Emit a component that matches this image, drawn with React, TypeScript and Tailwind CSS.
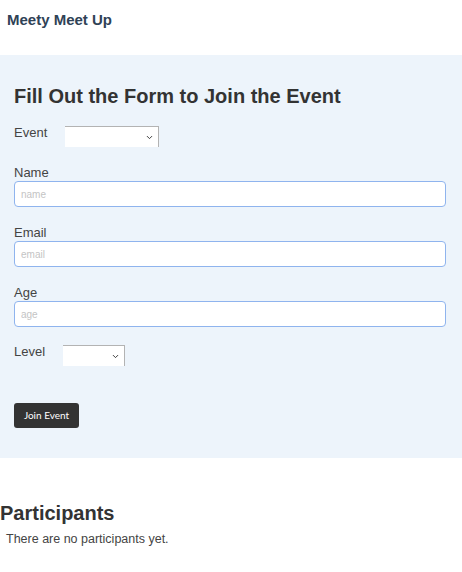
import { ChevronDown } from 'lucide-react';

const FIELDS = [
  { label: 'Name', placeholder: 'name' },
  { label: 'Email', placeholder: 'email' },
  { label: 'Age', placeholder: 'age' },
];

function PlainSelect({ width }: { width: string }) {
  return (
    <div className={`relative h-[21px] ${width} bg-white border-t border-r border-[#b3b3b3]`}>
      <ChevronDown className="absolute right-[4px] top-[6px] w-[9px] h-[9px] text-[#333]" strokeWidth={2.5} />
    </div>
  );
}

export default function App() {
  return (
    <div className="w-[462px] min-h-[572px] bg-white font-['Liberation_Sans',Arial,sans-serif] text-[#444]">
      <div className="h-[55px] px-[7px] pt-[10px]">
        <p className="text-[15px] leading-[19px] font-bold text-[#2f4256]">Meety Meet Up</p>
      </div>

      <section className="h-[403px] bg-[#edf4fb] pl-[14px] pr-[16px] pt-[29px]">
        <h2 className="text-[20px] leading-[24px] font-bold text-[#333]">
          Fill Out the Form to Join the Event
        </h2>

        <div className="mt-[17px] flex items-start">
          <span className="w-[51px] text-[13px] leading-[16px]">Event</span>
          <div className="mt-[1px]">
            <PlainSelect width="w-[94px]" />
          </div>
        </div>

        {FIELDS.map((f) => (
          <div key={f.label} className="mt-[18px]">
            <p className="text-[13px] leading-[16px]">{f.label}</p>
            <input
              className="block w-full h-[26px] rounded-[4px] border border-[#8fb4ee] bg-white px-[6px] text-[10px] placeholder:text-[#c4c4c4] outline-none"
              placeholder={f.placeholder}
            />
          </div>
        ))}

        <div className="mt-[17px] flex items-start">
          <span className="w-[49px] text-[13px] leading-[16px]">Level</span>
          <div className="mt-[1px]">
            <PlainSelect width="w-[62px]" />
          </div>
        </div>

        <button className="mt-[37px] h-[25px] w-[65px] rounded-[3px] bg-[#333] text-[10px] text-white font-['Lato',sans-serif]">
          Join Event
        </button>
      </section>

      <h2 className="mt-[43px] text-[20px] leading-[24px] font-bold text-[#333]">Participants</h2>
      <p className="mt-[7px] pl-[6px] text-[12.5px] leading-[14px] text-[#444]">There are no participants yet.</p>
    </div>
  );
}
